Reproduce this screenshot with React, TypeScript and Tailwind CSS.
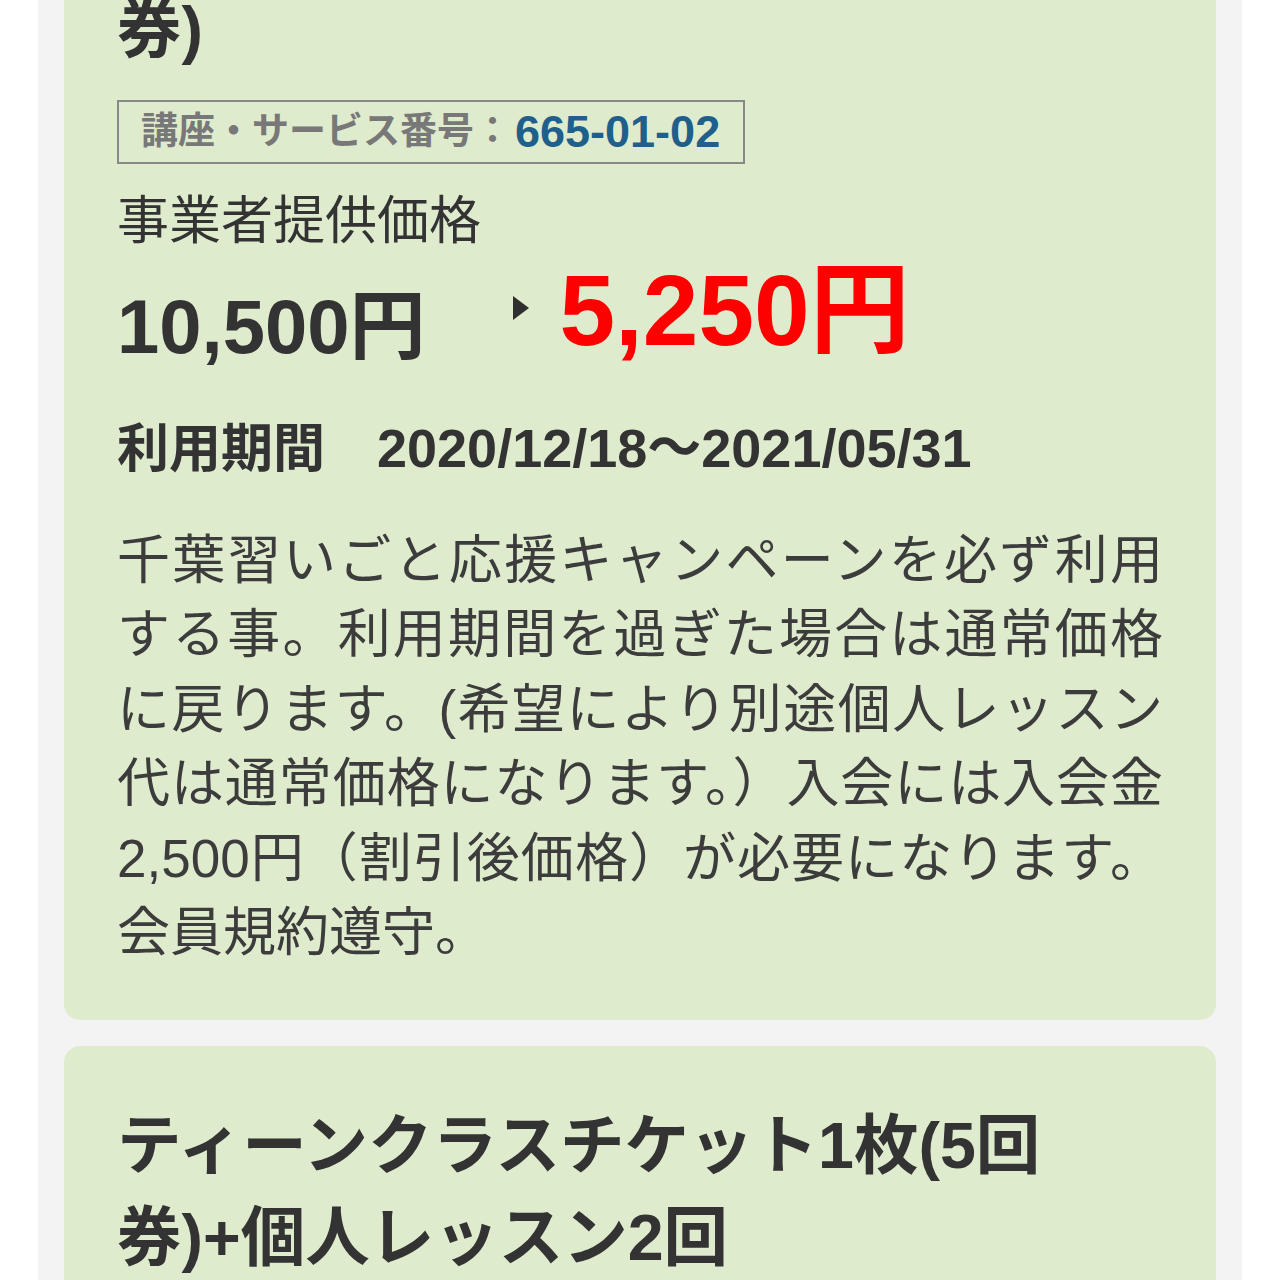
const sans = 'font-["Liberation_Sans","Noto_Sans_CJK_JP",sans-serif]';

function PriceArrow() {
    return (
        <svg width="16" height="24" viewBox="0 0 16 24" className="mt-[36px] ml-[88px] mr-[30px] shrink-0">
            <polygon points="0,0 16,12 0,24" fill="#2f2f2f" />
        </svg>
    );
}

export default function App() {
    return (
        <div className={`h-[1280px] overflow-hidden bg-white ${sans}`}>
            <div className="mx-[38px] min-h-full bg-[#f3f3f3] px-[26px]">
                {/* course card */}
                <div className="-mt-[162px] rounded-2xl bg-[#dfebcd] px-[53px] pt-[54px] pb-[50px]">
                    <h2 className="text-[64.5px] leading-[92px] font-bold text-[#333333]">
                        ティーンクラスチケット1枚(5回
                        <br />
                        券)
                    </h2>

                    <div className="mt-6 inline-flex h-16 items-center border-2 border-[#888888] pr-[23px] pl-[22px]">
                        <span className="text-[37px] font-bold text-[#787878]">
                            講座・サービス番号：
                        </span>
                        <span className="ml-[4px] text-[45px] font-bold text-[#1f5f8b]">
                            665-01-02
                        </span>
                    </div>

                    <p className="mt-[21px] text-[52px] leading-[73px] text-[#333333]">
                        事業者提供価格
                    </p>

                    <div className="mt-[2px] flex items-start">
                        <span className="mt-[29px] text-[76px] leading-none font-bold text-[#333333]">
                            10,500円
                        </span>
                        <PriceArrow />
                        <span className="text-[100px] leading-none font-bold text-[#ff0000]">
                            5,250円
                        </span>
                    </div>

                    <p className="mt-[47px] text-[52px] leading-[73px] font-bold text-[#333333]">
                        利用期間　<span className="text-[54px]">2020/12/18〜2021/05/31</span>
                    </p>

                    <p className="mt-[38px] text-justify text-[53px] leading-[74.4px] text-[#3c3c3c]">
                        千葉習いごと応援キャンペーンを必ず利用する事。利用期間を過ぎた場合は通常価格に戻ります。(希望により別途個人レッスン代は通常価格になります。）入会には入会金2,500円（割引後価格）が必要になります。会員規約遵守。
                    </p>
                </div>

                <div className="mt-[26px] rounded-2xl bg-[#dfebcd] px-[53px] pt-[54px] pb-[52px]">
                    <h2 className="text-[64.5px] leading-[92px] font-bold text-[#333333]">
                        ティーンクラスチケット1枚(5回券)+個人レッスン2回
                    </h2>
                    <div className="mt-6 inline-flex h-16 items-center border-2 border-[#888888] pr-[23px] pl-[22px]">
                        <span className="text-[37px] font-bold text-[#787878]">
                            講座・サービス番号：
                        </span>
                        <span className="ml-[4px] text-[45px] font-bold text-[#1f5f8b]">
                            665-01-03
                        </span>
                    </div>
                </div>
            </div>
        </div>
    );
}
